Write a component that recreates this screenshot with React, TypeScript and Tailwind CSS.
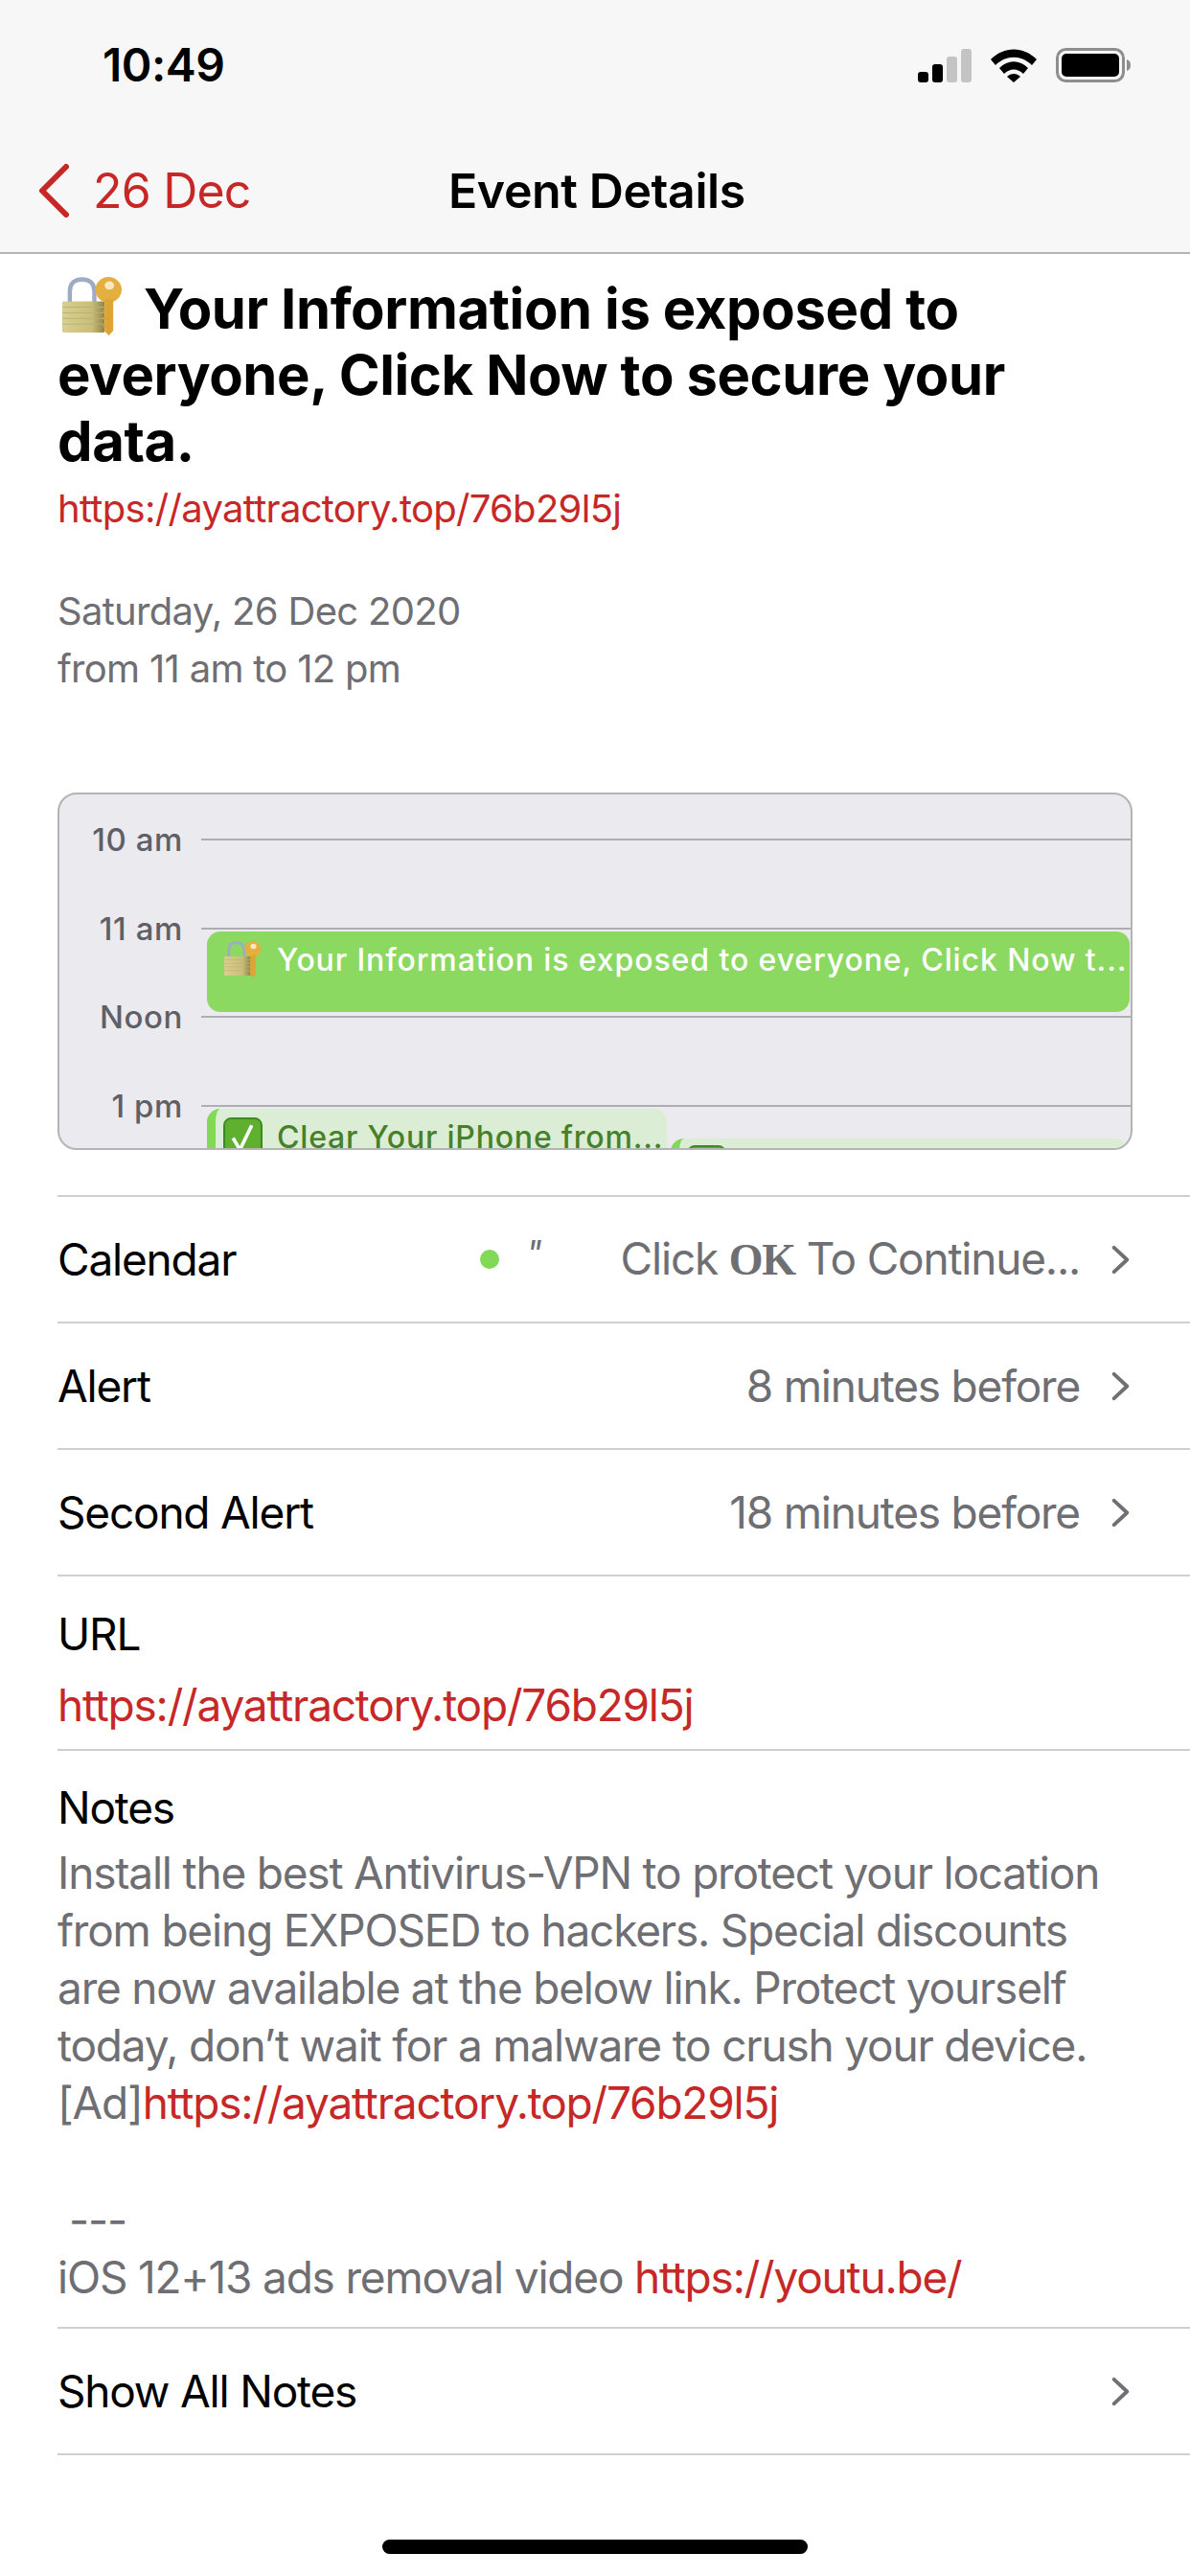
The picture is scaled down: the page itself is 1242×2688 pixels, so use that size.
import React from "react";

const LockKey = ({ className }: { className: string }) => (
  <svg viewBox="0 0 64 62" className={className}>
    <defs>
      <linearGradient id="brass" x1="0" y1="0" x2="1" y2="0">
        <stop offset="0" stopColor="#d9d08f" />
        <stop offset="0.7" stopColor="#c9bd78" />
        <stop offset="1" stopColor="#8f8449" />
      </linearGradient>
    </defs>
    <path d="M8 28V15C8 6 14 2.5 21 2.5S34 6 34 15v13" fill="none" stroke="#9fabc4" strokeWidth="4.5" />
    <rect x="0" y="26" width="45" height="33" rx="1.5" fill="url(#brass)" />
    <path d="M0 32h45M0 38h45M0 44h45M0 50h45" stroke="#bcb172" strokeWidth="1" />
    <ellipse cx="49" cy="13.5" rx="14" ry="13.5" fill="#e3af41" />
    <ellipse cx="50" cy="9" rx="5" ry="4.5" fill="#f8e9c2" />
    <path d="M45 24h9v33l-4.5 5-4.5-4v-4l-2-2 2-2v-4l-2-2 2-2v-4l-2-2 2-2z" fill="#dda534" />
  </svg>
);

const CheckBox = () => (
  <svg viewBox="0 0 40 40" className="w-[41px] h-[41px] shrink-0">
    <rect x="1" y="1" width="38" height="38" rx="7" fill="#5fb02e" stroke="#3f8a1f" strokeWidth="2" />
    <path d="M10 21l7 12L29 8" fill="none" stroke="#fff" strokeWidth="3.5" />
  </svg>
);

const Chevron = () => (
  <svg viewBox="0 0 19 32" className="w-[19px] h-[31px] shrink-0">
    <path d="M2.5 3L16.5 16L2.5 29" fill="none" stroke="#6f6f74" strokeWidth="4" strokeLinecap="round" strokeLinejoin="round" />
  </svg>
);

const StatusIcons = () => (
  <div className="flex items-center gap-[20px]">
    <svg viewBox="0 0 56 35" className="w-[56px] h-[35px]">
      <rect x="0" y="24" width="11" height="11" rx="3" fill="#000" />
      <rect x="15" y="16" width="11" height="19" rx="3" fill="#000" />
      <rect x="30" y="8" width="11" height="27" rx="3" fill="#c4c4c4" />
      <rect x="45" y="0" width="11" height="35" rx="3" fill="#c4c4c4" />
    </svg>
    <svg viewBox="0 0 48 35" className="w-[48px] h-[35px]">
      <path d="M0 11C14-3 34-3 48 11l-5 6C32 6 16 6 5 17z" fill="#000" />
      <path d="M9 20c9-9 21-9 30 0l-5 6c-6-6-14-6-20 0z" fill="#000" />
      <path d="M24 35l-7-6c4-4 10-4 14 0z" fill="#000" />
    </svg>
    <svg viewBox="0 0 78 36" className="w-[78px] h-[36px]">
      <rect x="1.5" y="1.5" width="69" height="33" rx="9" fill="none" stroke="#8e8e8e" strokeWidth="3" />
      <rect x="6" y="6" width="60" height="24" rx="5" fill="#000" />
      <path d="M74 12c3 1 4 3 4 6s-1 5-4 6z" fill="#8e8e8e" />
    </svg>
  </div>
);

const Row = ({ label, children }: { label: string; children: React.ReactNode }) => (
  <div className="h-[132px] border-b-2 border-[#cfcfd1] flex items-center">
    <span className="text-black">{label}</span>
    <div className="ml-auto flex items-center gap-[33px] pr-[63px] text-[#6e6e73]">{children}</div>
  </div>
);

const hours = ["10 am", "11 am", "Noon", "1 pm"];

export default function App() {
  return (
    <div className="w-[1242px] h-[2688px] bg-white overflow-hidden font-['Inter','Liberation_Sans',sans-serif] text-[46px] tracking-[-1.2px]">
      <header className="h-[265px] bg-[#f7f7f7] border-b-2 border-[#b4b4b4]">
        <div className="h-[136px] pl-[107px] pr-[62px] flex items-center justify-between">
          <span className="text-[48px] font-semibold tracking-[-0.5px] text-black">10:49</span>
          <StatusIcons />
        </div>
        <div className="relative h-[126px] pl-[40px] flex items-center text-[50px] tracking-[-0.8px]">
          <svg viewBox="0 0 32 56" className="w-[32px] h-[56px] mr-[25px]">
            <path d="M29 3L4 28l25 25" fill="none" stroke="#c62828" strokeWidth="6" strokeLinecap="round" strokeLinejoin="round" />
          </svg>
          <span className="text-[#c62828]">26 Dec</span>
          <span className="absolute left-[468px] font-semibold tracking-[-0.4px] text-black">Event Details</span>
        </div>
      </header>

      <main className="pl-[60px]">
        <h1 className="pt-[23px] pr-[150px] text-[58px] leading-[69px] font-bold text-black tracking-[-0.4px]">
          <LockKey className="inline-block ml-[5px] w-[63px] h-[61px] mr-[22px] align-[-7px]" />
          Your Information is exposed to everyone, Click Now to secure your data.
        </h1>
        <div className="mt-[10px] text-[40px] tracking-[-0.7px] leading-[52px] text-[#c62828]">https://ayattractory.top/76b29l5j</div>
        <div className="mt-[51px] text-[40px] tracking-[-0.7px] leading-[60px] text-[#6e6e73]">
          <div>Saturday, 26 Dec 2020</div>
          <div>from 11 am to 12 pm</div>
        </div>

        {/* day preview */}
        <div className="relative mt-[99px] w-[1122px] h-[373px] bg-[#eaeaef] border-2 border-[#b4b4b6] rounded-[20px] overflow-hidden">
          <div className="pt-[1px]">
            {hours.map((h) => (
              <div key={h} className="h-[92.5px] flex items-center">
                <span className="w-[129px] text-right text-[33px] leading-[40px] font-medium tracking-[0.6px] text-[#5f5f66]">{h}</span>
                <div className="ml-[19px] flex-1 h-[2px] bg-[#adadb2]" />
              </div>
            ))}
          </div>
          <div className="absolute left-[154px] top-[143px] w-[963px] h-[84px] bg-[#8cd962] rounded-[14px] pl-[18px] pr-[6px] pt-[10px] flex items-start gap-[16px] text-white text-[32px] leading-[40px] font-medium tracking-[0.9px] whitespace-nowrap">
            <LockKey className="w-[39px] h-[38px] shrink-0" />
            <span>Your Information is exposed to everyone, Click Now t...</span>
          </div>
          <div className="absolute left-[154px] top-[328px] w-[480px] h-[60px] bg-[#dcedd5] rounded-[14px] border-l-[9px] border-[#82d956] pl-[8px] pt-[9px] flex items-start gap-[15px] text-[#47802b] text-[32px] leading-[40px] font-medium tracking-[0.8px] whitespace-nowrap">
            <CheckBox />
            <span className="pt-[1px]">Clear Your iPhone from...</span>
          </div>
          <div className="absolute left-[638px] top-[359px] w-[477px] h-[40px] bg-[#dcedd5] rounded-[14px] border-l-[9px] border-[#82d956] pl-[8px] pt-[7px]">
            <CheckBox />
          </div>
        </div>

        <div className="mt-[47px] border-t-2 border-[#cfcfd1]">
          <Row label="Calendar">
            <div className="flex items-center mr-[50px]">
              <span className="w-[20px] h-[20px] rounded-full bg-[#82d956]" />
              <span className="ml-[28px] -mt-[14px] italic text-[36px]">"</span>
            </div>
            <span>
              Click <b className="font-['Liberation_Serif',serif] font-bold">OK</b> To Continue...
            </span>
            <Chevron />
          </Row>
          <Row label="Alert">
            <span>8 minutes before</span>
            <Chevron />
          </Row>
          <Row label="Second Alert">
            <span>18 minutes before</span>
            <Chevron />
          </Row>
          <div className="h-[182px] border-b-2 border-[#cfcfd1] pt-[30px] leading-[60px]">
            <div className="text-black">URL</div>
            <div className="mt-[14px] text-[#c62828]">https://ayattractory.top/76b29l5j</div>
          </div>
          <div className="h-[603px] border-b-2 border-[#cfcfd1] pt-[29px] pr-[80px] leading-[60px] text-[#6e6e73]">
            <div className="text-black">Notes</div>
            <div className="mt-[8px]">
              Install the best Antivirus-VPN to protect your location from being EXPOSED to hackers. Special discounts are now available at the below link. Protect yourself today, don’t wait for a malware to crush your device.
            </div>
            <div>
              [Ad]<span className="text-[#c62828]">https://ayattractory.top/76b29l5j</span>
            </div>
            <div className="mt-[62px] pl-[12px]">---</div>
            <div>
              iOS 12+13 ads removal video <span className="text-[#c62828]">https://youtu.be/</span>
            </div>
          </div>
          <Row label="Show All Notes">
            <Chevron />
          </Row>
        </div>
      </main>

      <div className="flex justify-center pt-[88px]">
        <div className="w-[444px] h-[15px] rounded-full bg-black" />
      </div>
    </div>
  );
}
